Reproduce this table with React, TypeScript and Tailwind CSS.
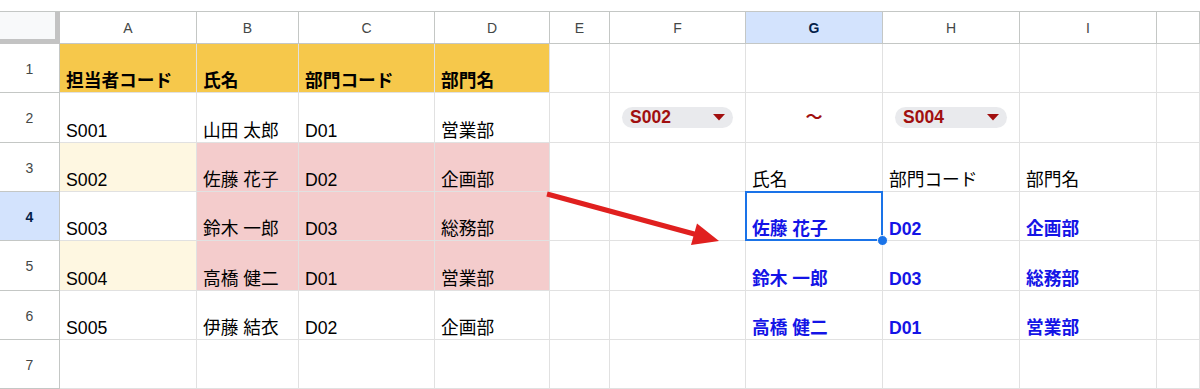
import React from 'react';

type Cell = {
  text?: string;
  bg?: string;
  kind?: 'bold' | 'blue' | 'chip' | 'tilde';
  selected?: boolean;
};

// 列幅 (行番号列 + A〜J)
const cols = ['A', 'B', 'C', 'D', 'E', 'F', 'G', 'H', 'I', 'J'];
const colWidths = ['w-[137px]', 'w-[102px]', 'w-[136px]', 'w-[115px]', 'w-[60px]', 'w-[136px]', 'w-[137px]', 'w-[137px]', 'w-[137px]', 'flex-1'];
const rowHeights = ['h-[49px]', 'h-[50px]', 'h-[49px]', 'h-[49px]', 'h-[50px]', 'h-[49px]', 'h-[49px]'];

const YELLOW = 'bg-[#f6c84b]';
const CREAM = 'bg-[#fef7e1]';
const PINK = 'bg-[#f4cccc]';

const rows: Cell[][] = [
  [
    { text: '担当者コード', bg: YELLOW, kind: 'bold' },
    { text: '氏名', bg: YELLOW, kind: 'bold' },
    { text: '部門コード', bg: YELLOW, kind: 'bold' },
    { text: '部門名', bg: YELLOW, kind: 'bold' },
    {}, {}, {}, {}, {}, {},
  ],
  [
    { text: 'S001' },
    { text: '山田 太郎' },
    { text: 'D01' },
    { text: '営業部' },
    {},
    { text: 'S002', kind: 'chip' },
    { text: '〜', kind: 'tilde' },
    { text: 'S004', kind: 'chip' },
    {}, {},
  ],
  [
    { text: 'S002', bg: CREAM },
    { text: '佐藤 花子', bg: PINK },
    { text: 'D02', bg: PINK },
    { text: '企画部', bg: PINK },
    {}, {},
    { text: '氏名' },
    { text: '部門コード' },
    { text: '部門名' },
    {},
  ],
  [
    { text: 'S003' },
    { text: '鈴木 一郎', bg: PINK },
    { text: 'D03', bg: PINK },
    { text: '総務部', bg: PINK },
    {}, {},
    { text: '佐藤 花子', kind: 'blue', selected: true },
    { text: 'D02', kind: 'blue' },
    { text: '企画部', kind: 'blue' },
    {},
  ],
  [
    { text: 'S004', bg: CREAM },
    { text: '高橋 健二', bg: PINK },
    { text: 'D01', bg: PINK },
    { text: '営業部', bg: PINK },
    {}, {},
    { text: '鈴木 一郎', kind: 'blue' },
    { text: 'D03', kind: 'blue' },
    { text: '総務部', kind: 'blue' },
    {},
  ],
  [
    { text: 'S005' },
    { text: '伊藤 結衣' },
    { text: 'D02' },
    { text: '企画部' },
    {}, {},
    { text: '高橋 健二', kind: 'blue' },
    { text: 'D01', kind: 'blue' },
    { text: '営業部', kind: 'blue' },
    {},
  ],
  [{}, {}, {}, {}, {}, {}, {}, {}, {}, {}],
];

function Chip({ label }: { label: string }) {
  return (
    <div className="mx-[12px] flex h-[21px] flex-1 items-center justify-between rounded-full bg-[#e9eaed] pl-[8px] pr-[8px]">
      <span className="text-[17.5px] font-bold leading-none text-[#a10f0f]">{label}</span>
      <svg width="12" height="7" viewBox="0 0 12 7">
        <polygon points="0,0 12,0 6,6.5" fill="#a10f0f" />
      </svg>
    </div>
  );
}

function SheetCell({ cell, width }: { cell: Cell; width: string }) {
  const base = `relative flex shrink-0 border-r border-b border-[#e1e1e1] ${width} ${cell.bg ?? 'bg-white'} ${cell.selected ? 'z-10' : ''}`;

  if (cell.kind === 'chip') {
    return <div className={`${base} items-center`}>{cell.text && <Chip label={cell.text} />}</div>;
  }
  if (cell.kind === 'tilde') {
    return (
      <div className={`${base} items-center justify-center`}>
        <span className="text-[17px] font-bold text-[#a10f0f]">{cell.text}</span>
      </div>
    );
  }

  const textClass =
    cell.kind === 'bold'
      ? 'font-bold text-black'
      : cell.kind === 'blue'
      ? 'font-bold text-[#1414e6]'
      : 'text-black';

  return (
    <div className={`${base} items-end pb-0 pl-[6px]`}>
      <span className={`whitespace-nowrap text-[17.7px] leading-[22px] ${textClass}`}>{cell.text}</span>
      {cell.selected && (
        <>
          <div className="pointer-events-none absolute -left-px -top-px -right-px -bottom-px border-2 border-[#1a73e8]" />
          <div className="absolute -bottom-[6px] -right-[6px] h-[11px] w-[11px] rounded-full border border-white bg-[#1a73e8]" />
        </>
      )}
    </div>
  );
}

export default function App() {
  return (
    <div
      className="relative h-[389px] w-[1200px] overflow-hidden bg-white"
      style={{ fontFamily: '"Liberation Sans", Arial, "Noto Sans CJK JP", sans-serif' }}
    >
      {/* ツールバーの切れ端 */}
      <div className="h-[12px] border-b border-[#c4c7c5] bg-white" />

      {/* 列ヘッダー */}
      <div className="flex h-[32px]">
        <div className="w-[60px] shrink-0 border-r-[5px] border-b-[5px] border-[#c3c3c3] bg-[#f8f9fa]" />
        {cols.map((c, i) => (
          <div
            key={c}
            className={`flex shrink-0 items-center justify-center border-r border-b border-[#c4c7c5] pt-[2px] text-[14px] ${colWidths[i]} ${
              c === 'G' ? 'bg-[#d3e3fd] font-bold text-[#041e49]' : 'bg-white text-[#444746]'
            }`}
          >
            {c === 'J' ? '' : c}
          </div>
        ))}
      </div>

      {/* 行 */}
      {rows.map((row, r) => (
        <div key={r} className={`flex ${rowHeights[r]}`}>
          <div
            className={`flex w-[60px] shrink-0 items-center justify-center border-r border-b border-[#c4c7c5] pt-[2px] text-[14px] ${
              r === 3 ? 'bg-[#d3e3fd] font-bold text-[#041e49]' : 'bg-white text-[#444746]'
            }`}
          >
            {r + 1}
          </div>
          {row.map((cell, i) => (
            <SheetCell key={i} cell={cell} width={colWidths[i]} />
          ))}
        </div>
      ))}

      {/* 赤い矢印 */}
      <svg className="pointer-events-none absolute left-0 top-0 z-20" width="1200" height="389">
        <line x1="547" y1="194" x2="696" y2="234.5" stroke="#e0201f" strokeWidth="5" />
        <polygon points="719,241 691,245 697,223.5" fill="#e0201f" />
      </svg>
    </div>
  );
}
